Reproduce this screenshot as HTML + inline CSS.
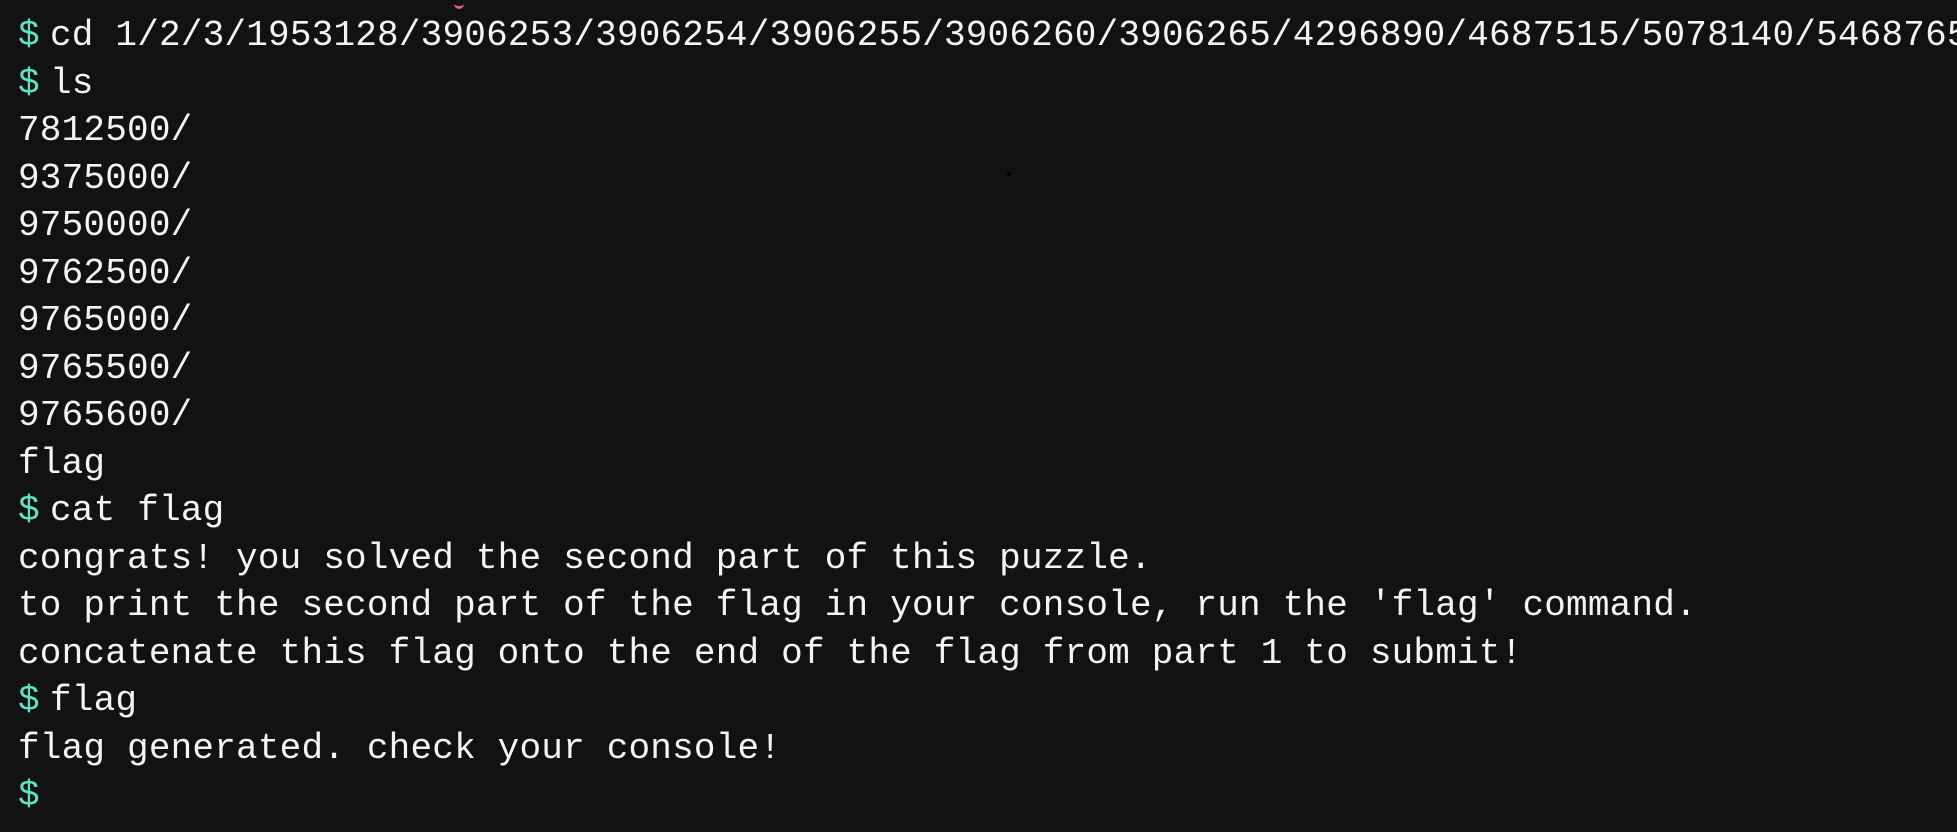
<!DOCTYPE html>
<html><head><style>
html,body{margin:0;padding:0;background:#121212;width:1957px;height:832px;overflow:hidden}
.t{position:absolute;left:18px;top:12px;font-family:"Liberation Mono","DejaVu Sans Mono",monospace;font-size:36px;letter-spacing:0.2px;line-height:47.5px;color:#f4f4f4;white-space:pre}
.d{color:#5fe3c3;display:inline-block;width:32px;letter-spacing:0}
</style></head><body>
<div style="position:absolute;left:454px;top:0;width:10px;height:6px;border-bottom:3px solid #e8609a;border-radius:0 0 8px 8px"></div>
<div style="position:absolute;left:1007px;top:172px;width:4px;height:4px;background:#000;border-radius:2px"></div>
<div class="t"><span class="d">$</span>cd 1/2/3/1953128/3906253/3906254/3906255/3906260/3906265/4296890/4687515/5078140/5468765/
<span class="d">$</span>ls
7812500/
9375000/
9750000/
9762500/
9765000/
9765500/
9765600/
flag
<span class="d">$</span>cat flag
congrats! you solved the second part of this puzzle.
to print the second part of the flag in your console, run the 'flag' command.
concatenate this flag onto the end of the flag from part 1 to submit!
<span class="d">$</span>flag
flag generated. check your console!
<span class="d">$</span></div>
</body></html>
